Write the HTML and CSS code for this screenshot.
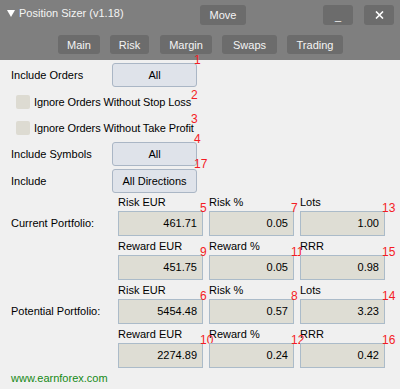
FILE: index.html
```html
<!DOCTYPE html>
<html lang="en">
<head>
    <meta charset="UTF-8">
    <title>Position Sizer</title>
    <link rel="stylesheet" href="styles.css">
</head>
<body>
    <div class="sizer">
        <div class="head">
            <div class="titlebar">
                <div class="title">
                    <svg class="caret" width="8" height="7" viewBox="0 0 8 7"><polygon points="0,0 8,0 4,7" fill="#fff"/></svg>
                    Position Sizer (v1.18)
                </div>
                <a class="hbtn move" href="javascript:;">Move</a>
                <a class="hbtn min" href="javascript:;">_</a>
                <a class="hbtn close" href="javascript:;">
                    <svg width="9" height="8" viewBox="0 0 9 8"><path d="M1 0.5 L8 7.5 M8 0.5 L1 7.5" stroke="#fff" stroke-width="1.6"/></svg>
                </a>
            </div>
            <div class="tabs">
                <a class="tab" href="javascript:;">Main</a>
                <a class="tab" href="javascript:;">Risk</a>
                <a class="tab" href="javascript:;">Margin</a>
                <a class="tab" href="javascript:;">Swaps</a>
                <a class="tab" href="javascript:;">Trading</a>
            </div>
        </div>
        <div class="content">
            <div class="row first">
                <span class="lbl">Include Orders</span>
                <a class="pick" href="javascript:;">All<i class="num">1</i></a>
            </div>
            <div class="check sl">
                <span class="cb"></span>Ignore Orders Without Stop Loss<i class="num n2">2</i>
            </div>
            <div class="check tp">
                <span class="cb"></span>Ignore Orders Without Take Profit<i class="num n3">3</i>
            </div>
            <div class="row symbols">
                <span class="lbl">Include Symbols</span>
                <a class="pick" href="javascript:;">All<i class="num">4</i></a>
            </div>
            <div class="row dirs">
                <span class="lbl">Include</span>
                <a class="pick" href="javascript:;">All Directions<i class="num n17">17</i></a>
            </div>

            <div class="portfolio">
                <div class="side">Current Portfolio:</div>
                <div class="cell"><div class="cap">Risk EUR</div><div class="field">461.71<i class="num">5</i></div></div>
                <div class="cell"><div class="cap">Risk %</div><div class="field">0.05<i class="num">7</i></div></div>
                <div class="cell"><div class="cap">Lots</div><div class="field">1.00<i class="num">13</i></div></div>
                <div class="cell"><div class="cap">Reward EUR</div><div class="field">451.75<i class="num">9</i></div></div>
                <div class="cell"><div class="cap">Reward %</div><div class="field">0.05<i class="num">11</i></div></div>
                <div class="cell"><div class="cap">RRR</div><div class="field">0.98<i class="num">15</i></div></div>

                <div class="side">Potential Portfolio:</div>
                <div class="cell"><div class="cap">Risk EUR</div><div class="field">5454.48<i class="num">6</i></div></div>
                <div class="cell"><div class="cap">Risk %</div><div class="field">0.57<i class="num">8</i></div></div>
                <div class="cell"><div class="cap">Lots</div><div class="field">3.23<i class="num">14</i></div></div>
                <div class="cell"><div class="cap">Reward EUR</div><div class="field">2274.89<i class="num">10</i></div></div>
                <div class="cell"><div class="cap">Reward %</div><div class="field">0.24<i class="num">12</i></div></div>
                <div class="cell"><div class="cap">RRR</div><div class="field">0.42<i class="num">16</i></div></div>
            </div>

            <div class="footer">www.earnforex.com</div>
        </div>
    </div>
</body>
</html>
```

FILE: styles.css
```css
* {
    margin: 0;
    padding: 0;
    box-sizing: border-box;
}
body {
    width: 400px;
    height: 389px;
    overflow: hidden;
    font-family: "Liberation Sans", Arial, sans-serif;
    font-size: 11px;
    color: #000;
    background: #f0f0f0;
}
a {
    color: inherit;
    text-decoration: none;
}
.sizer {
    width: 400px;
    height: 389px;
}

/* header */
.head {
    height: 60px;
    background: #7f7f7f;
    color: #f4f4f4;
}
.titlebar {
    display: flex;
    align-items: center;
    height: 25px;
    padding: 5px 6px 0 7px;
}
.title {
    display: flex;
    align-items: center;
    width: 193px;
    align-self: flex-start;
    height: 16px;
}
.caret {
    margin-right: 4px;
}
.hbtn {
    display: flex;
    align-items: center;
    justify-content: center;
    height: 20px;
    background: #6c6c6c;
    border-radius: 3px;
}
.move {
    width: 46px;
}
.min {
    width: 30px;
    margin-left: auto;
    align-items: flex-end;
    padding-bottom: 3px;
}
.close {
    width: 30px;
    margin-left: 11px;
}
.tabs {
    display: flex;
    justify-content: center;
    margin-top: 10px;
    padding-left: 1px;
}
.tab {
    display: flex;
    align-items: center;
    justify-content: center;
    height: 19px;
    margin: 0 5px;
    background: #6c6c6c;
    border-radius: 3px;
}
.tab:nth-child(1) { width: 42px; }
.tab:nth-child(2) { width: 39px; }
.tab:nth-child(3) { width: 52px; margin-left: 6px; }
.tab:nth-child(4) { width: 55px; }
.tab:nth-child(5) { width: 56px; }

/* panel */
.content {
    height: 329px;
    padding: 3px 0 0 11px;
    background: #f0f0f0;
    border-top-left-radius: 3px;
}
.row {
    display: flex;
    align-items: center;
    height: 24px;
}
.lbl {
    width: 101px;
}
.pick {
    position: relative;
    display: flex;
    align-items: center;
    justify-content: center;
    width: 85px;
    height: 24px;
    background: #dfe3ea;
    border: 1px solid #aab6c5;
    border-radius: 3px;
}
.symbols {
    margin-top: 7px;
}
.dirs {
    margin-top: 3px;
}
.check {
    position: relative;
    display: flex;
    align-items: center;
    height: 14px;
    padding-left: 5px;
    letter-spacing: -0.1px;
}
.sl {
    margin-top: 8px;
}
.tp {
    margin-top: 12px;
}
.cb {
    width: 14px;
    height: 14px;
    margin-right: 4px;
    background: #dddbd2;
    border-radius: 2px;
}

/* red field numbers */
.num {
    position: absolute;
    left: calc(100% - 2px);
    top: -10px;
    font-style: normal;
    font-size: 12px;
    line-height: 12px;
    letter-spacing: 0;
    color: #f41c24;
}
.n2 {
    left: 180px;
    top: -6px;
}
.n3 {
    left: 180px;
    top: -8px;
}
.n17 {
    top: -12px;
}

.portfolio {
    display: grid;
    grid-template-columns: 101px 85px 85px 85px;
    column-gap: 6px;
    row-gap: 5px;
    margin-top: 4px;
}
.side {
    grid-row: span 2;
    padding-top: 14px;
    line-height: 25px;
}
.cap {
    height: 14px;
    line-height: 11px;
}
.field {
    position: relative;
    height: 25px;
    padding-right: 5px;
    line-height: 23px;
    text-align: right;
    background: #deddd4;
    border: 1px solid #abbbc9;
}
.footer {
    margin-top: 4px;
    line-height: 13px;
    color: #168a16;
}
```
